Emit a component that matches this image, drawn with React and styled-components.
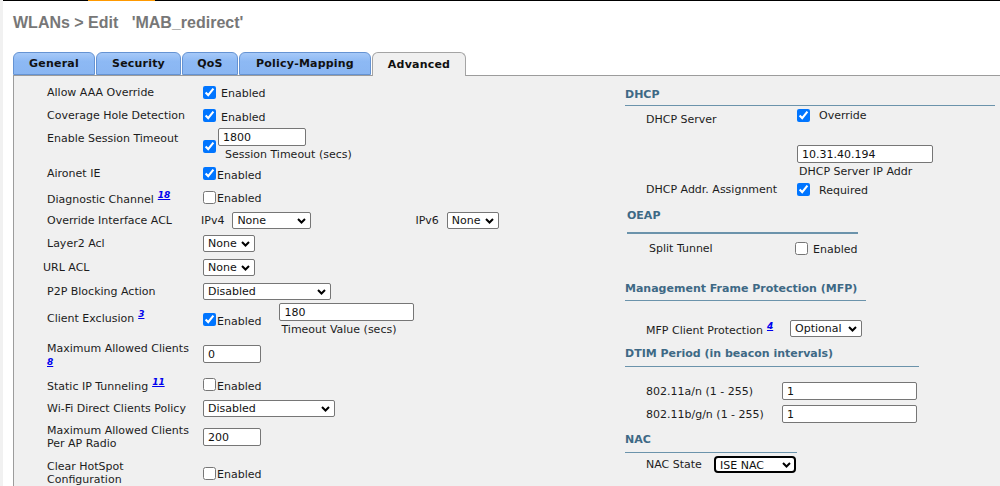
import React from "react";
import styled, { createGlobalStyle } from "styled-components";

const GlobalStyle = createGlobalStyle`
  html, body {
    margin: 0;
    padding: 0;
    background: #fff;
  }
  body {
    font-family: "DejaVu Sans", Verdana, sans-serif;
    font-size: 11px;
    color: #1c1c1c;
  }
`;

const Page = styled.div`
  width: 1000px;
  height: 486px;
  overflow: hidden;
  display: flex;
  flex-direction: column;
  box-sizing: border-box;
  border-left: 3px solid #f1f1f1;
`;

const TopLine = styled.div`
  height: 1px;
  background: #000;
  display: flex;
  flex-shrink: 0;
`;

const TopMark = styled.span`
  margin-left: 85px;
  width: 67px;
  background: #f90;
`;

const Title = styled.h1`
  margin: 0;
  padding: 13px 0 0 10px;
  height: 51px;
  box-sizing: border-box;
  font-family: "Liberation Sans", Arial, sans-serif;
  font-size: 16px;
  font-weight: bold;
  color: #777;
  white-space: pre;
  flex-shrink: 0;
`;

const Tabs = styled.div`
  display: flex;
  padding-left: 10px;
  height: 23px;
  flex-shrink: 0;
  position: relative;
  z-index: 1;
`;

const Tab = styled.div`
  width: ${({ w }) => w}px;
  margin-right: ${({ gap }) => gap}px;
  height: ${({ active }) => (active ? 24 : 23)}px;
  box-sizing: border-box;
  display: flex;
  align-items: center;
  justify-content: center;
  font-weight: bold;
  font-size: 11px;
  letter-spacing: 0.2px;
  color: #111;
  border: 1px solid ${({ active }) => (active ? "#a4a4a4" : "#6593d3")};
  border-bottom: ${({ active }) => (active ? "none" : "1px solid #6593d3")};
  border-radius: 6px 6px 0 0;
  background: ${({ active }) =>
    active ? "#f0f0f0" : "linear-gradient(#a6c9f8, #8db9f4 40%, #8ab6f2)"};
`;

const Panel = styled.div`
  flex: 1;
  margin-left: 10px;
  background: #f0f0f0;
  border-top: 1px solid #9c9c9c;
  border-left: 1px solid #9c9c9c;
  display: grid;
  grid-template-columns: 611px 1fr;
`;

const LeftColumn = styled.div`
  padding: 4px 0 0 33px;
  display: flex;
  flex-direction: column;
`;

const Row = styled.div`
  display: grid;
  grid-template-columns: ${({ labelW }) => labelW || 156}px auto;
  height: ${({ h }) => h}px;
  align-items: ${({ align }) => align || "center"};
  padding-left: ${({ indent }) => indent || 0}px;
  margin-top: ${({ mt }) => mt || 0}px;
  flex-shrink: 0;
`;

const Label = styled.div`
  line-height: 13px;
  margin-left: ${({ shift }) => shift || 0}px;
  padding-top: ${({ pt }) => pt || 0}px;
  align-self: ${({ pt }) => (pt ? "start" : "auto")};
`;

const Control = styled.div`
  display: flex;
  align-items: ${({ align }) => align || "center"};
  gap: ${({ gap }) => gap || 0}px;
  margin-left: ${({ shift }) => shift || 0}px;
`;

const Check = styled.input.attrs({ type: "checkbox", readOnly: true })`
  margin: 0;
  margin-top: ${({ mt }) => mt || 0}px;
  width: 13px;
  height: 13px;
  accent-color: #0075ff;
  flex-shrink: 0;
`;

const CheckText = styled.span`
  line-height: 13px;
  padding-top: 3px;
  margin-left: ${({ gap }) => gap || 0}px;
`;

const Field = styled.input.attrs({ type: "text", readOnly: true })`
  width: ${({ w }) => w}px;
  height: 18px;
  box-sizing: border-box;
  margin: 0;
  margin-top: ${({ mt }) => mt || 0}px;
  padding: 0 4px;
  border: 1px solid #767676;
  border-radius: 2px;
  background: #fff;
  font-family: "DejaVu Sans", Verdana, sans-serif;
  font-size: 11px;
  color: #111;
`;

const SelectWrap = styled.span`
  position: relative;
  display: inline-flex;
`;

const Select = styled.select`
  appearance: none;
  width: ${({ w }) => w}px;
  height: 17px;
  box-sizing: border-box;
  margin: 0;
  padding: 0 14px 0 4px;
  border: ${({ focused }) => (focused ? "2px solid #000" : "1px solid #767676")};
  border-radius: ${({ focused }) => (focused ? 4 : 2)}px;
  background: #fff;
  font-family: "DejaVu Sans", Verdana, sans-serif;
  font-size: 11px;
  line-height: 15px;
  color: #111;
`;

const Chevron = styled.svg`
  position: absolute;
  right: 5px;
  top: 6px;
  pointer-events: none;
`;

const Stack = styled.div`
  display: flex;
  flex-direction: column;
  margin-left: ${({ ml }) => ml || 0}px;
`;

const Caption = styled.span`
  line-height: 13px;
  margin-top: 2px;
  margin-left: ${({ ml }) => ml || 0}px;
`;

const Note = styled.a`
  color: #0000ee;
  font-size: 9px;
  font-weight: bold;
  font-style: italic;
  text-decoration: underline;
  vertical-align: ${({ block }) => (block ? "baseline" : "5px")};
  margin-left: ${({ block }) => (block ? 0 : 4)}px;
`;

const InlineLabel = styled.span`
  margin-right: 4px;
`;

const Spacer = styled.span`
  width: ${({ w }) => w}px;
`;

const RightColumn = styled.div`
  display: flex;
  flex-direction: column;
  padding-top: 12px;
`;

const SectionHead = styled.div`
  width: ${({ w }) => w}px;
  margin-top: ${({ mt }) => mt || 0}px;
  margin-left: ${({ ml }) => ml || 0}px;
  padding-bottom: ${({ pb }) => pb}px;
  border-bottom: ${({ thick }) => (thick ? 2 : 1)}px solid #6b93ab;
  line-height: 13px;
  font-weight: bold;
  color: #3e6985;
  flex-shrink: 0;
`;

const CheckOption = ({ checked, gap = 1, mt, children = "Enabled" }) => (
  <Control>
    <Check checked={checked} mt={mt} />
    <CheckText gap={gap}>{children}</CheckText>
  </Control>
);

const Opt = ({ w, value, focused }) => (
  <SelectWrap>
    <Select w={w} value={value} focused={focused} onChange={() => {}}>
      <option>{value}</option>
    </Select>
    <Chevron width="9" height="6" viewBox="0 0 9 6">
      <path d="M1 1l3.5 3.5L8 1" fill="none" stroke="#000" strokeWidth="2" />
    </Chevron>
  </SelectWrap>
);

const tabs = [
  { name: "General", w: 82, gap: 1 },
  { name: "Security", w: 85, gap: 1 },
  { name: "QoS", w: 56, gap: 1 },
  { name: "Policy-Mapping", w: 132, gap: 1 },
  { name: "Advanced", w: 94, gap: 0 },
];

export default function App() {
  return (
    <>
      <GlobalStyle />
      <Page>
        <TopLine>
          <TopMark />
        </TopLine>
        <Title>{"WLANs > Edit   'MAB_redirect'"}</Title>
        <Tabs>
          {tabs.map((t) => (
            <Tab key={t.name} w={t.w} gap={t.gap} active={t.name === "Advanced"}>
              {t.name}
            </Tab>
          ))}
        </Tabs>
        <Panel>
          <LeftColumn>
            <Row h={24}>
              <Label>Allow AAA Override</Label>
              <CheckOption checked gap={5} />
            </Row>
            <Row h={23}>
              <Label>Coverage Hole Detection</Label>
              <CheckOption checked gap={5} />
            </Row>
            <Row h={35}>
              <Label pt={5}>Enable Session Timeout</Label>
              <Control gap={2}>
                <Check checked mt={4} />
                <Stack>
                  <Field w={88} value="1800" />
                  <Caption ml={7}>Session Timeout (secs)</Caption>
                </Stack>
              </Control>
            </Row>
            <Row h={23}>
              <Label>Aironet IE</Label>
              <CheckOption checked />
            </Row>
            <Row h={24}>
              <Label>
                Diagnostic Channel<Note href="#">18</Note>
              </Label>
              <CheckOption />
            </Row>
            <Row h={22}>
              <Label>Override Interface ACL</Label>
              <Control gap={4} shift={-2}>
                <InlineLabel>IPv4</InlineLabel>
                <Opt w={79} value="None" />
                <Spacer w={96} />
                <InlineLabel>IPv6</InlineLabel>
                <Opt w={52} value="None" />
              </Control>
            </Row>
            <Row h={24}>
              <Label>Layer2 Acl</Label>
              <Control>
                <Opt w={52} value="None" />
              </Control>
            </Row>
            <Row h={24}>
              <Label shift={-4}>URL ACL</Label>
              <Control>
                <Opt w={52} value="None" />
              </Control>
            </Row>
            <Row h={24}>
              <Label>P2P Blocking Action</Label>
              <Control>
                <Opt w={128} value="Disabled" />
              </Control>
            </Row>
            <Row h={33}>
              <Label pt={5}>
                Client Exclusion<Note href="#">3</Note>
              </Label>
              <Control>
                <Check checked />
                <CheckText gap={1}>Enabled</CheckText>
                <Stack ml={18}>
                  <Field w={135} value="180" />
                  <Caption ml={2}>Timeout Value (secs)</Caption>
                </Stack>
              </Control>
            </Row>
            <Row h={36}>
              <Label pt={6}>
                Maximum Allowed Clients
                <br />
                <Note href="#" block>
                  8
                </Note>
              </Label>
              <Control>
                <Field w={58} value="0" />
              </Control>
            </Row>
            <Row h={25}>
              <Label>
                Static IP Tunneling<Note href="#">11</Note>
              </Label>
              <CheckOption />
            </Row>
            <Row h={22}>
              <Label>Wi-Fi Direct Clients Policy</Label>
              <Control>
                <Opt w={132} value="Disabled" />
              </Control>
            </Row>
            <Row h={36}>
              <Label>
                Maximum Allowed Clients
                <br />
                Per AP Radio
              </Label>
              <Control>
                <Field w={58} value="200" />
              </Control>
            </Row>
            <Row h={36}>
              <Label>
                Clear HotSpot
                <br />
                Configuration
              </Label>
              <CheckOption />
            </Row>
          </LeftColumn>

          <RightColumn>
            <SectionHead w={370} pb={4}>
              DHCP
            </SectionHead>
            <Row h={24} indent={21} labelW={151} align="start">
              <Label pt={7}>DHCP Server</Label>
              <CheckOption checked gap={9} mt={2}>
                Override
              </CheckOption>
            </Row>
            <Row h={47} indent={21} labelW={151} align="start">
              <span />
              <Stack>
                <Field w={136} value="10.31.40.194" mt={15} />
                <Caption ml={2}>DHCP Server IP Addr</Caption>
              </Stack>
            </Row>
            <Row h={18} mt={3} indent={21} labelW={151}>
              <Label>DHCP Addr. Assignment</Label>
              <CheckOption checked gap={9}>
                Required
              </CheckOption>
            </Row>

            <SectionHead w={231} mt={11} ml={2} pb={10} thick>
              OEAP
            </SectionHead>
            <Row h={24} mt={2} indent={24} labelW={146}>
              <Label>Split Tunnel</Label>
              <CheckOption gap={5} />
            </Row>

            <SectionHead w={241} mt={22} pb={5}>
              Management Frame Protection (MFP)
            </SectionHead>
            <Row h={24} mt={15} indent={21} labelW={144}>
              <Label>
                MFP Client Protection<Note href="#">4</Note>
              </Label>
              <Control>
                <Opt w={72} value="Optional" />
              </Control>
            </Row>

            <SectionHead w={294} mt={7} pb={6}>
              DTIM Period (in beacon intervals)
            </SectionHead>
            <Row h={22} mt={13} indent={21} labelW={136}>
              <Label>802.11a/n (1 - 255)</Label>
              <Control>
                <Field w={135} value="1" />
              </Control>
            </Row>
            <Row h={22} mt={1} indent={21} labelW={136}>
              <Label>802.11b/g/n (1 - 255)</Label>
              <Control>
                <Field w={135} value="1" />
              </Control>
            </Row>

            <SectionHead w={172} mt={8} pb={6}>
              NAC
            </SectionHead>
            <Row h={22} indent={21} labelW={68}>
              <Label>NAC State</Label>
              <Control>
                <Opt w={82} value="ISE NAC" focused />
              </Control>
            </Row>
          </RightColumn>
        </Panel>
      </Page>
    </>
  );
}
